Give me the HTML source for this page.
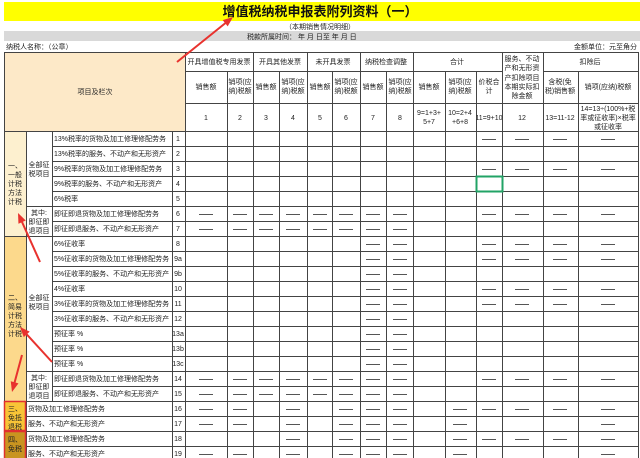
<!DOCTYPE html>
<html><head><meta charset="utf-8"><style>
html,body{margin:0;padding:0;background:#fff;width:640px;height:458px;overflow:hidden}
svg{display:block}
text{font-family:"Liberation Sans","Noto Sans CJK SC",sans-serif;font-size:7px;fill:#222}
.c{text-anchor:middle}
</style></head><body>
<svg id="s" width="640" height="458" viewBox="0 0 640 458" xmlns="http://www.w3.org/2000/svg">
<rect x="4" y="2" width="636" height="19" fill="#ffff00"/>
<rect x="4" y="31" width="636" height="10" fill="#d9d9d9"/>
<rect x="4" y="52" width="181" height="79" fill="#fde9c8"/>
<rect x="4" y="131" width="22" height="105" fill="#fdf0cf"/>
<rect x="4" y="236" width="22" height="165" fill="#fcd98c"/>
<rect x="4" y="401" width="22" height="30" fill="#f8c437"/>
<rect x="4" y="431" width="22" height="30" fill="#c99420"/>
<g id="lines" stroke="#444" stroke-width="1" shape-rendering="crispEdges"></g>
<rect x="4.5" y="401.5" width="21" height="29" fill="none" stroke="#e03030" stroke-width="1.5"/>
<rect x="4.5" y="431.5" width="21" height="28" fill="none" stroke="#e03030" stroke-width="1.5"/>
<rect x="476.5" y="176.5" width="26" height="15" fill="none" stroke="#21a366" stroke-width="2"/>

<text x="320" y="16" class="c" style="font-size:13px;font-weight:bold;fill:#111">增值税纳税申报表附列资料（一）</text>
<text x="320" y="29" class="c">（本期销售情况明细）</text>
<text x="247" y="39">税款所属时间：   年   月   日至   年   月   日</text>
<text x="6" y="49">纳税人名称：（公章）</text>
<text x="637" y="49" style="text-anchor:end">金额单位：元至角分</text>

<text x="95" y="94" class="c">项目及栏次</text>
<text x="219" y="64" class="c">开具增值税专用发票</text>
<text x="280" y="64" class="c">开具其他发票</text>
<text x="333" y="64" class="c">未开具发票</text>
<text x="386" y="64" class="c">纳税检查调整</text>
<text x="457" y="64" class="c">合计</text>
<text x="590" y="64" class="c">扣除后</text>
<text x="522" y="61" class="c">服务、不动</text>
<text x="522" y="70" class="c">产和无形资</text>
<text x="522" y="80" class="c">产扣除项目</text>
<text x="522" y="89" class="c">本期实际扣</text>
<text x="522" y="98" class="c">除金额</text>

<text x="206" y="89" class="c">销售额</text>
<text x="240" y="84" class="c">销项(应</text><text x="240" y="93" class="c">纳)税额</text>
<text x="266" y="89" class="c">销售额</text>
<text x="293" y="84" class="c">销项(应</text><text x="293" y="93" class="c">纳)税额</text>
<text x="320" y="89" class="c">销售额</text>
<text x="346" y="84" class="c">销项(应</text><text x="346" y="93" class="c">纳)税额</text>
<text x="373" y="89" class="c">销售额</text>
<text x="400" y="84" class="c">销项(应</text><text x="400" y="93" class="c">纳)税额</text>
<text x="429" y="89" class="c">销售额</text>
<text x="460" y="84" class="c">销项(应</text><text x="460" y="93" class="c">纳)税额</text>
<text x="489" y="84" class="c">价税合</text><text x="489" y="93" class="c">计</text>
<text x="560" y="84" class="c">含税(免</text><text x="560" y="93" class="c">税)销售额</text>
<text x="608" y="89" class="c">销项(应纳)税额</text>

<text x="206" y="120" class="c">1</text>
<text x="240" y="120" class="c">2</text>
<text x="266" y="120" class="c">3</text>
<text x="293" y="120" class="c">4</text>
<text x="320" y="120" class="c">5</text>
<text x="346" y="120" class="c">6</text>
<text x="373" y="120" class="c">7</text>
<text x="400" y="120" class="c">8</text>
<text x="429" y="115" class="c">9=1+3+</text><text x="429" y="124" class="c">5+7</text>
<text x="460" y="115" class="c">10=2+4</text><text x="460" y="124" class="c">+6+8</text>
<text x="489" y="120" class="c">11=9+10</text>
<text x="522" y="120" class="c">12</text>
<text x="560" y="120" class="c">13=11-12</text>
<text x="608" y="111" class="c">14=13÷(100%+税</text>
<text x="608" y="120" class="c">率或征收率)×税率</text>
<text x="608" y="129" class="c">或征收率</text>

<text x="15" y="168" class="c">一、</text>
<text x="15" y="177" class="c">一般</text>
<text x="15" y="186" class="c">计税</text>
<text x="15" y="195" class="c">方法</text>
<text x="15" y="204" class="c">计税</text>
<text x="39" y="167" class="c">全部征</text>
<text x="39" y="176" class="c">税项目</text>
<text x="39" y="215" class="c">其中:</text>
<text x="39" y="224" class="c">即征即</text>
<text x="39" y="233" class="c">退项目</text>

<text x="15" y="300" class="c">二、</text>
<text x="15" y="309" class="c">简易</text>
<text x="15" y="318" class="c">计税</text>
<text x="15" y="327" class="c">方法</text>
<text x="15" y="336" class="c">计税</text>
<text x="39" y="300" class="c">全部征</text>
<text x="39" y="309" class="c">税项目</text>
<text x="39" y="380" class="c">其中:</text>
<text x="39" y="389" class="c">即征即</text>
<text x="39" y="398" class="c">退项目</text>

<text x="15" y="411" class="c">三、</text>
<text x="15" y="420" class="c">免抵</text>
<text x="15" y="429" class="c">退税</text>
<text x="15" y="442" class="c">四、</text>
<text x="15" y="451" class="c">免税</text>

<text x="54" y="141">13%税率的货物及加工修理修配劳务</text>
<text x="54" y="156">13%税率的服务、不动产和无形资产</text>
<text x="54" y="171">9%税率的货物及加工修理修配劳务</text>
<text x="54" y="186">9%税率的服务、不动产和无形资产</text>
<text x="54" y="201">6%税率</text>
<text x="54" y="216">即征即退货物及加工修理修配劳务</text>
<text x="54" y="231">即征即退服务、不动产和无形资产</text>
<text x="54" y="246">6%征收率</text>
<text x="54" y="261">5%征收率的货物及加工修理修配劳务</text>
<text x="54" y="276">5%征收率的服务、不动产和无形资产</text>
<text x="54" y="291">4%征收率</text>
<text x="54" y="306">3%征收率的货物及加工修理修配劳务</text>
<text x="54" y="321">3%征收率的服务、不动产和无形资产</text>
<text x="54" y="336">预征率   %</text>
<text x="54" y="351">预征率   %</text>
<text x="54" y="366">预征率   %</text>
<text x="54" y="381">即征即退货物及加工修理修配劳务</text>
<text x="54" y="396">即征即退服务、不动产和无形资产</text>
<text x="28" y="411">货物及加工修理修配劳务</text>
<text x="28" y="426">服务、不动产和无形资产</text>
<text x="28" y="441">货物及加工修理修配劳务</text>
<text x="28" y="456">服务、不动产和无形资产</text>

<text x="178" y="141" class="c">1</text>
<text x="178" y="156" class="c">2</text>
<text x="178" y="171" class="c">3</text>
<text x="178" y="186" class="c">4</text>
<text x="178" y="201" class="c">5</text>
<text x="178" y="216" class="c">6</text>
<text x="178" y="231" class="c">7</text>
<text x="178" y="246" class="c">8</text>
<text x="178" y="261" class="c">9a</text>
<text x="178" y="276" class="c">9b</text>
<text x="178" y="291" class="c">10</text>
<text x="178" y="306" class="c">11</text>
<text x="178" y="321" class="c">12</text>
<text x="178" y="336" class="c">13a</text>
<text x="178" y="351" class="c">13b</text>
<text x="178" y="366" class="c">13c</text>
<text x="178" y="381" class="c">14</text>
<text x="178" y="396" class="c">15</text>
<text x="178" y="411" class="c">16</text>
<text x="178" y="426" class="c">17</text>
<text x="178" y="441" class="c">18</text>
<text x="178" y="456" class="c">19</text>

<g id="arrows" stroke="#e8322e" fill="#e8322e" stroke-width="2"></g>
</svg>
<script>
var g=document.getElementById('lines'),ns='http://www.w3.org/2000/svg';
function L(x1,y1,x2,y2,c,w){var l=document.createElementNS(ns,'line');l.setAttribute('x1',x1);l.setAttribute('y1',y1);l.setAttribute('x2',x2);l.setAttribute('y2',y2);if(c)l.setAttribute('stroke',c);if(w)l.setAttribute('stroke-width',w);g.appendChild(l);}
var X=[185,227,253,279,307,332,360,386,413,445,476,502,543,578,638];
var from52={185:1,253:1,307:1,360:1,413:1,502:1,543:1,638:1};
X.forEach(function(x){L(x+.5,from52[x]?52:71,x+.5,461);});
L(4.5,52,4.5,461);L(26.5,131,26.5,461);L(52.5,131,52.5,401);L(172.5,131,172.5,461);
L(4,52.5,638,52.5);L(185,71.5,502,71.5);L(543,71.5,638,71.5);L(185,103.5,638,103.5);L(4,131.5,638,131.5);
for(var i=1;i<=22;i++){var y=131+15*i+.5;var x0=52;
 if(i==7||i==18||i==20)x0=4;else if(i==5||i==16||i>=18)x0=26;L(x0,y,638,y);}
var cx=[206,240,266,293,320,346,373,400,429,460,489,522,560,608];
var D=[[11,12,13,14],[],[11,12,13,14],[],[],[1,2,3,4,5,6,7,8,11,12,13,14],[1,2,3,4,5,6,7,8],
[7,8,11,12,13,14],[7,8,11,12,13,14],[7,8],[7,8,11,12,13,14],[7,8,11,12,13,14],[7,8],[7,8],[7,8],[7,8],
[1,2,3,4,5,6,7,8,11,12,13,14],[1,2,3,4,5,6,7,8],
[1,2,4,6,7,8,10,11,12,13,14],[1,2,4,6,7,8,10,14],[4,6,7,8,10,11,12,13,14],[1,2,4,6,7,8,10,14]];
D.forEach(function(r,i){var y=131+15*i+8.5;r.forEach(function(c){var x=cx[c-1];L(x-7,y,x+7,y,'#555',1);});});
var a=document.getElementById('arrows');
function A(x1,y1,x2,y2){var l=document.createElementNS(ns,'line');l.setAttribute('x1',x1);l.setAttribute('y1',y1);
 var dx=x2-x1,dy=y2-y1,d=Math.hypot(dx,dy),ux=dx/d,uy=dy/d;l.setAttribute('x2',x2-ux*6);l.setAttribute('y2',y2-uy*6);a.appendChild(l);
 var p=document.createElementNS(ns,'polygon');var bx=x2-ux*10,by=y2-uy*10;
 p.setAttribute('points',x2+','+y2+' '+(bx-uy*4)+','+(by+ux*4)+' '+(bx+uy*4)+','+(by-ux*4));p.setAttribute('stroke','none');a.appendChild(p);}
A(177,62,233,17);A(40,262,18,213);A(52,362,20,327);A(22,355,12,392);
</script>
</body></html>
